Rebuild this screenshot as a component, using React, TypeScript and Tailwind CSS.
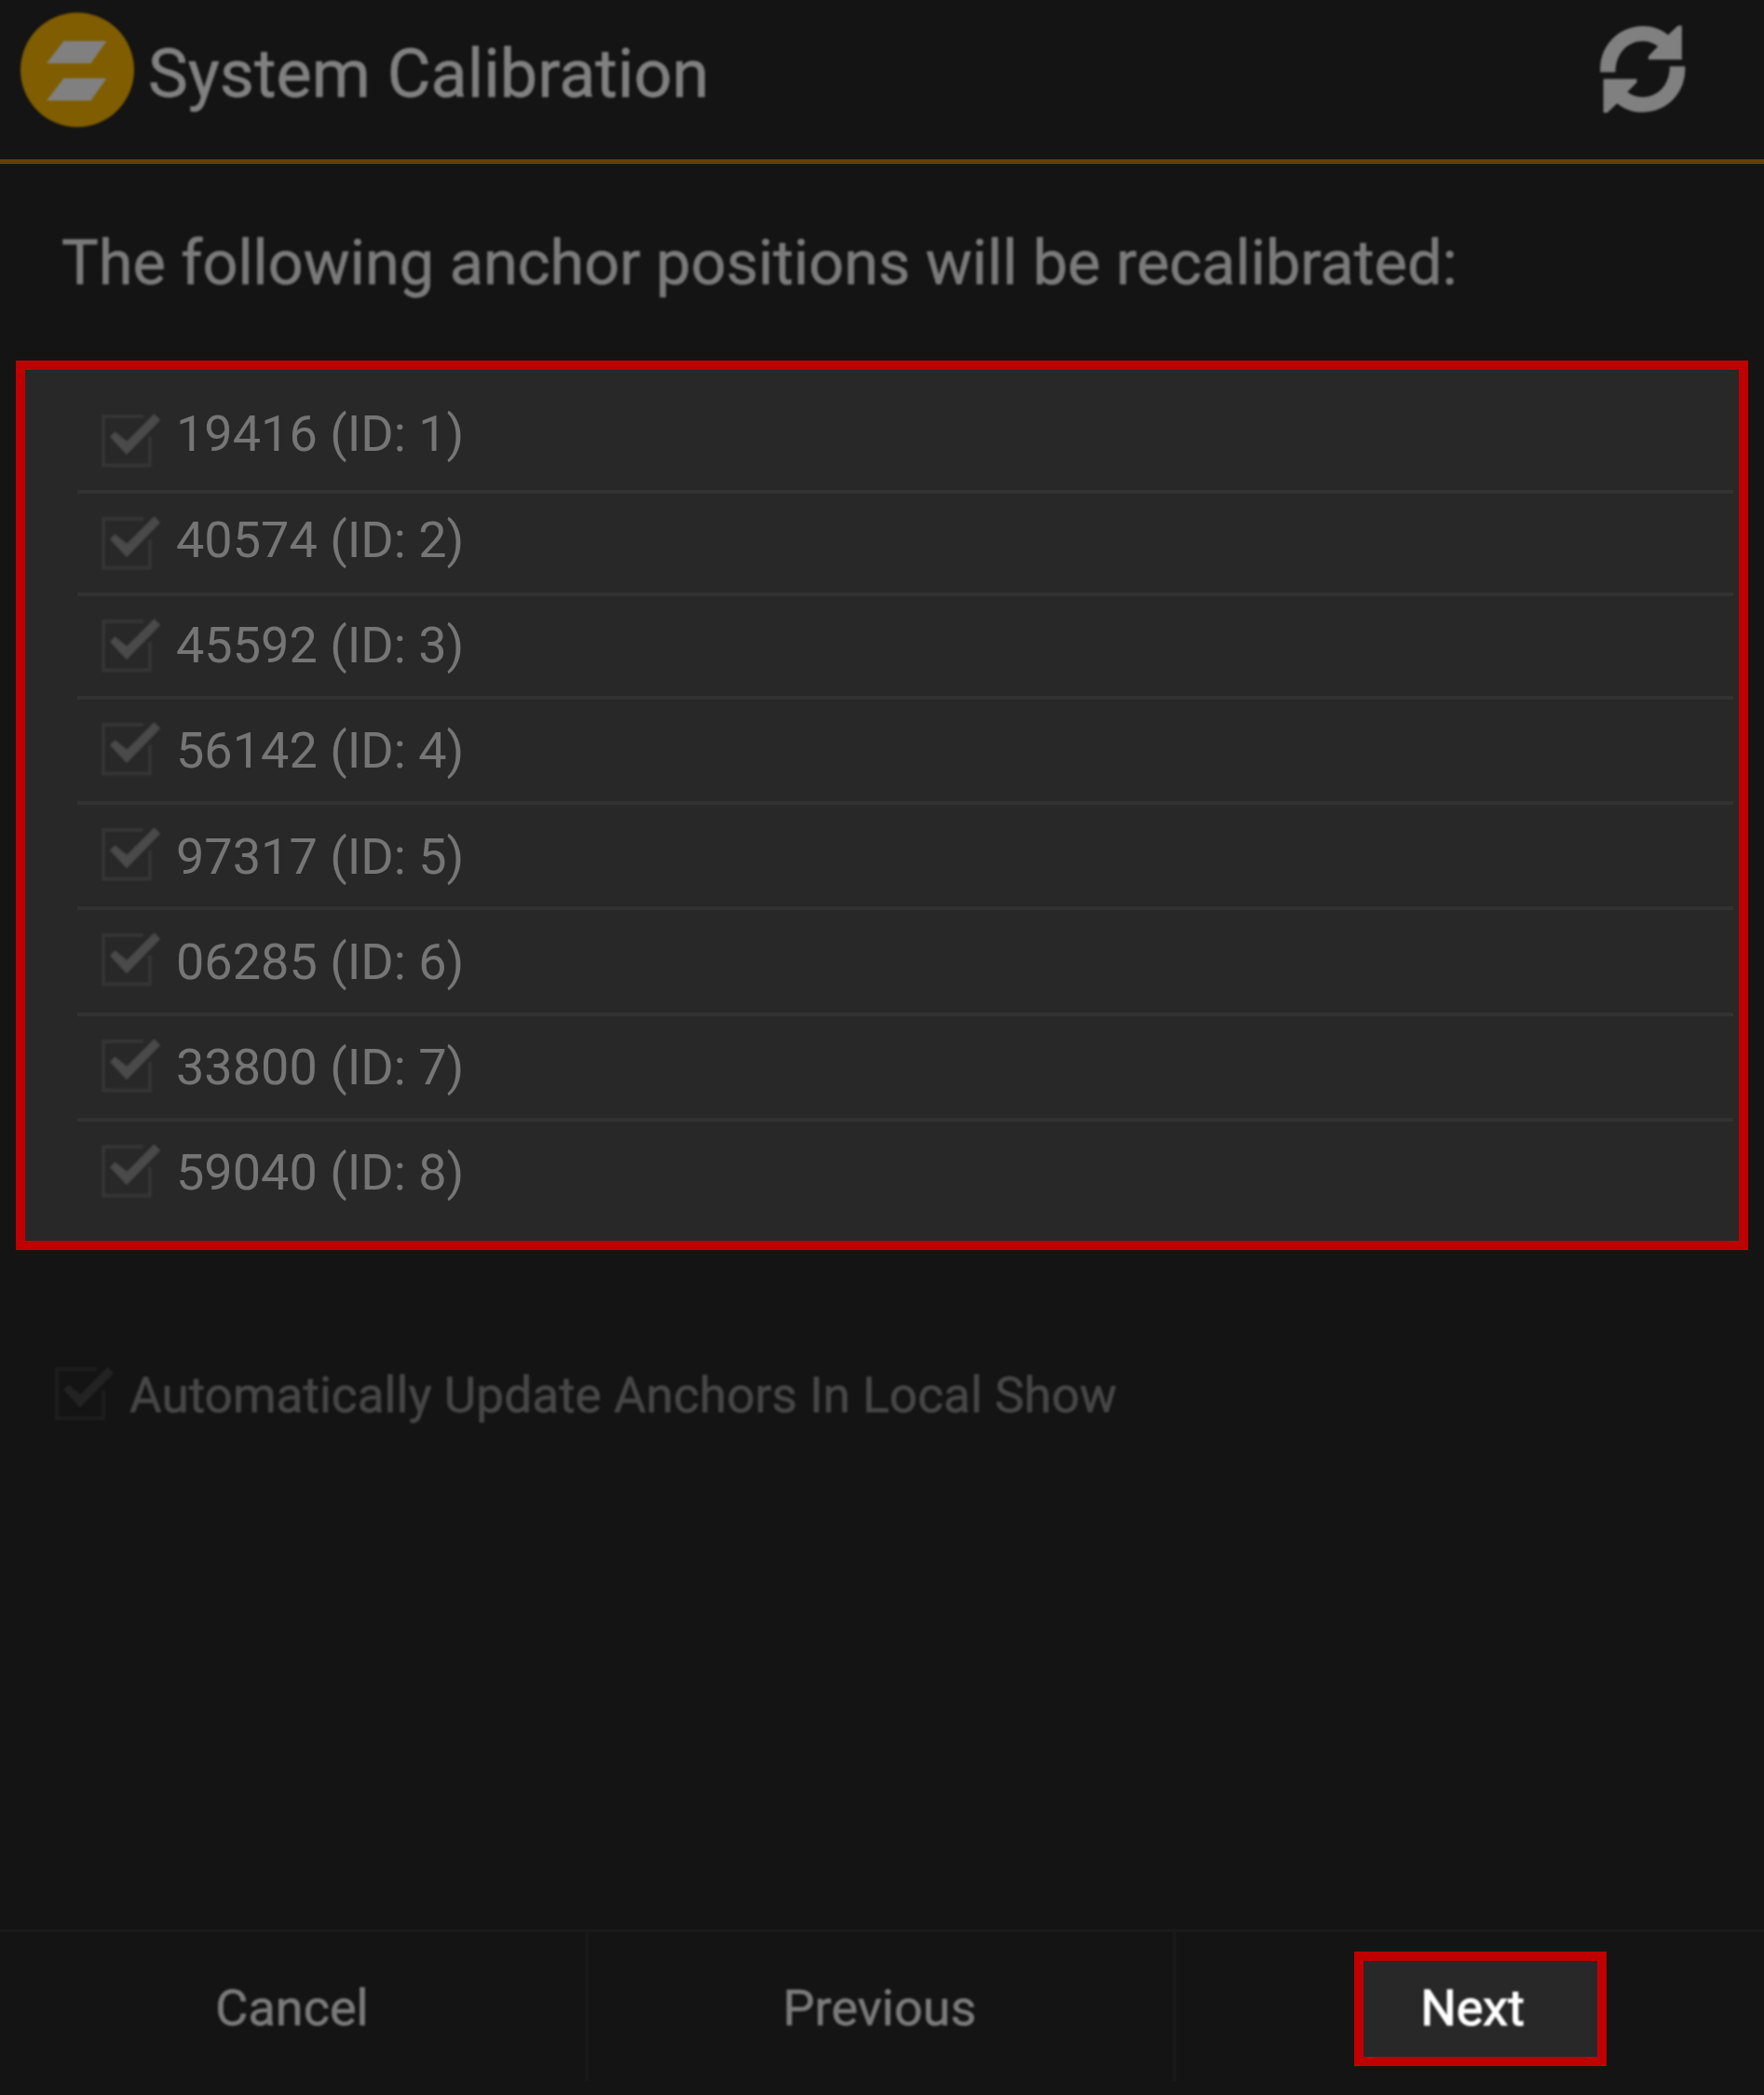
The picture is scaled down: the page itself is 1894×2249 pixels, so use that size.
type Anchor = { serial: string; id: number; row: string; box: string; text: string };

const anchors: Anchor[] = [
  { serial: "19416", id: 1, row: "h-[133px]", box: "mt-[46px]", text: "mt-[42px]" },
  { serial: "40574", id: 2, row: "h-[110px]", box: "mt-[23px]", text: "mt-[23px]" },
  { serial: "45592", id: 3, row: "h-[111px]", box: "mt-[23px]", text: "mt-[26px]" },
  { serial: "56142", id: 4, row: "h-[113px]", box: "mt-[23px]", text: "mt-[28px]" },
  { serial: "97317", id: 5, row: "h-[113px]", box: "mt-[23px]", text: "mt-[29px]" },
  { serial: "06285", id: 6, row: "h-[114px]", box: "mt-[23px]", text: "mt-[29px]" },
  { serial: "33800", id: 7, row: "h-[113px]", box: "mt-[23px]", text: "mt-[28px]" },
  { serial: "59040", id: 8, row: "h-[128px]", box: "mt-[23px]", text: "mt-[28px]" },
];

function Logo() {
  return (
    <svg viewBox="0 0 122 124" className="mt-[12.5px] h-[124px] w-[122px] shrink-0 blur-[1px]">
      <ellipse cx="61" cy="62" rx="61" ry="61.500" fill="#7f5d00" />
      <path d="M46.5 31H92.500L75.500 55H28Z" fill="#808080" />
      <path d="M46.500 71H92.500L75.500 95H28Z" fill="#808080" />
    </svg>
  );
}

function RefreshIcon() {
  const arrow =
    "M38.700 78A46.300 46.300 0 0 1 85 28C96 28 105 31.500 112.300 37.700L123 27.500H127.300V64.300H91V60.500L101.300 50C97 46.500 91 44.500 85 44.500C68 44.500 55.300 58 55.300 78Z";
  return (
    <svg viewBox="38 27 93.400 95.600" className="h-[94.6px] w-[93.4px] blur-[1px]" fill="#808080">
      <path d={arrow} />
      <path d={arrow} transform="rotate(180 84.700 74.800)" />
    </svg>
  );
}

function CheckedBox({ className }: { className: string }) {
  return (
    <svg viewBox="0 0 63 60" className={`h-[60px] w-[63px] shrink-0 blur-[1px] ${className}`}>
      <path d="M45 4H2V56.500H52V26" fill="none" stroke="currentColor" strokeWidth="4" />
      <path
        d="M9.800 26L14.500 21L27.300 31.500L56.500 2L62.300 8L27 44.500Z"
        strokeWidth="1.2"
        className="fill-(--tick) stroke-(--tick)"
      />
    </svg>
  );
}

export default function App() {
  return (
    <div className="flex h-[2249px] w-[1894px] flex-col overflow-hidden bg-[#141414] font-['Roboto',sans-serif] text-[#7a7a7a]">
      <header className="flex h-[176px] shrink-0 items-start border-b-5 border-[#644006] pl-[21.5px]">
        <Logo />
        <h1 className="mt-[44px] ml-[15.5px] text-[72px] leading-none whitespace-nowrap text-[#808080] blur-[1px] [-webkit-text-stroke:0.6px]">
          System Calibration
        </h1>
        <button className="mt-[27px] mr-[83.5px] ml-auto" aria-label="Refresh">
          <RefreshIcon />
        </button>
      </header>

      <main className="flex grow flex-col">
        <h2 className="mt-[73px] ml-[66px] h-[138px] text-[66.6px] leading-none whitespace-nowrap blur-[1px] [-webkit-text-stroke:0.6px]">
          The following anchor positions will be recalibrated:
        </h2>

        <ul className="mx-[17px] h-[955px] border-10 border-[#c00000] bg-[#282828] pr-[6px] pl-[56px]">
          {anchors.map((a) => (
            <li
              key={a.id}
              className={`flex items-start border-b-4 border-[#323232] pl-[26px] last:border-b-0 ${a.row}`}
            >
              <CheckedBox className={`text-[#353535] [--tick:#4a4a4a] ${a.box}`} />
              <span className={`ml-[17px] text-[54px] leading-none whitespace-nowrap text-[#757575] ${a.text}`}>
                {a.serial} (ID: {a.id})
              </span>
            </li>
          ))}
        </ul>

        <label className="mt-[124px] ml-[58.5px] flex items-start">
          <CheckedBox className="text-[#1e1e1e] [--tick:#232323]" />
          <span className="mt-[6px] ml-[17.5px] text-[53.2px] leading-none whitespace-nowrap text-[#474747] blur-[1px] [-webkit-text-stroke:0.6px]">
            Automatically Update Anchors In Local Show
          </span>
        </label>
      </main>

      <footer className="grid h-[178px] shrink-0 grid-cols-[632px_631px_631px] border-t-3 border-[#1a1a1a] text-[54px] leading-none [-webkit-text-stroke:0.6px]">
        <button className="mb-[15px] flex justify-center border-r-4 border-[#191919] pt-[55px] pr-[1px]">
          <span className="blur-[1px]">Cancel</span>
        </button>
        <button className="mb-[15px] flex justify-center border-r-4 border-[#191919] pt-[55px] pr-[2px]">
          <span className="blur-[1px]">Previous</span>
        </button>
        <button className="mt-[21px] ml-[191px] flex h-[123px] w-[271px] justify-center border-10 border-[#c00000] bg-[#282828] pt-[24px] pr-[17px] text-white">
          <span className="blur-[1px] [-webkit-text-stroke:1.2px]">Next</span>
        </button>
      </footer>
    </div>
  );
}
